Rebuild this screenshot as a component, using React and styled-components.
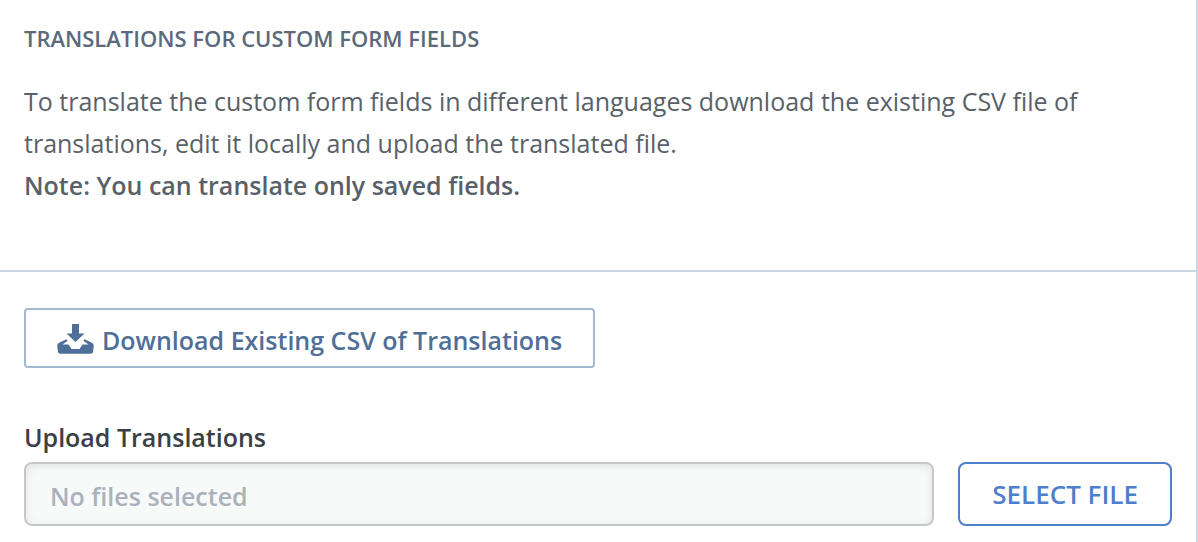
import styled, { createGlobalStyle } from "styled-components";

// estilos globales
const EstilosGlobales = createGlobalStyle`
  * {
    box-sizing: border-box;
  }
  body {
    margin: 0;
    background-color: #ffffff;
    font-family: "Open Sans", "Noto Sans", sans-serif;
  }
  button,
  input {
    font-family: inherit;
  }
`;

// Definir estilos para los componentes
const Panel = styled.main`
  min-height: 100vh;
  border-right: 2px solid #c9d7e5;
`;

const Introduccion = styled.section`
  padding: 23px 24px 64px;
  border-bottom: 2px solid #c9d7e5;
`;

const Titulo = styled.h2`
  margin: 0 0 27px;
  font-size: 22px;
  font-weight: 600;
  line-height: 30px;
  color: #5a6a7c;
  text-transform: uppercase;
`;

const Texto = styled.p`
  margin: 0;
  font-size: 25px;
  line-height: 42px;
  color: #596168;
`;

const Nota = styled.strong`
  display: block;
  font-weight: 600;
`;

const Acciones = styled.section`
  padding: 36px 24px 16px;
`;

const BotonDescargar = styled.button`
  display: flex;
  align-items: center;
  gap: 8px;
  height: 60px;
  margin: 0 0 48px;
  padding: 4px 31px 0;
  border: 2px solid #a3b8d1;
  border-radius: 4px;
  background-color: #ffffff;
  color: #4f6f98;
  font-size: 25px;
  font-weight: 600;
`;

const Etiqueta = styled.label`
  display: block;
  margin-bottom: 4px;
  font-size: 25px;
  font-weight: 600;
  line-height: 42px;
  color: #3a4045;
`;

const FilaArchivo = styled.div`
  display: flex;
  gap: 24px;
`;

const CampoArchivo = styled.input`
  flex: 1;
  min-width: 0;
  height: 64px;
  padding: 4px 24px 0;
  border: 2px solid #c6c8c8;
  border-radius: 8px;
  background-color: #f8faf9;
  box-shadow: inset 0 2px 8px #dfe2e1;
  font-size: 25px;
  font-weight: 600;
  &::placeholder {
    color: #a9b2bc;
    opacity: 1;
  }
`;

const BotonSeleccionar = styled.button`
  height: 64px;
  padding: 0 32px;
  border: 2px solid #4e7fca;
  border-radius: 8px;
  background-color: #ffffff;
  color: #4e7fca;
  font-size: 26px;
  font-weight: 600;
  text-transform: uppercase;
`;

// icono de descarga
function IconoDescargar() {
  return (
    <svg width="37" height="32" viewBox="0 0 37 32" fill="currentColor" aria-hidden="true">
      <path d="M15 0h7v9.500h5.500L18.500 18 9.500 9.500H15z" />
      <path d="M9.500 15.200L2 18.800Q0 20 .2 22l.8 6q.3 1.800 2.300 1.800h30.400q2 0 2.300-1.800l.8-6q.2-2-1.800-3.200L27.500 15.200l-1.200 1.500L31.500 20.500h-6l-3 4.500h-8l-3-4.500h-6l5.200-3.800z" />
    </svg>
  );
}

// componente App
function App() {
  return (
    <>
      <EstilosGlobales />
      <Panel>
        <Introduccion>
          <Titulo>Translations for custom form fields</Titulo>
          <Texto>
            To translate the custom form fields in different languages download
            the existing CSV file of translations, edit it locally and upload
            the translated file.
            <Nota>Note: You can translate only saved fields.</Nota>
          </Texto>
        </Introduccion>
        <Acciones>
          <BotonDescargar type="button">
            <IconoDescargar />
            Download Existing CSV of Translations
          </BotonDescargar>
          <Etiqueta htmlFor="archivo">Upload Translations</Etiqueta>
          <FilaArchivo>
            <CampoArchivo id="archivo" type="text" placeholder="No files selected" readOnly />
            <BotonSeleccionar type="button">Select file</BotonSeleccionar>
          </FilaArchivo>
        </Acciones>
      </Panel>
    </>
  );
}

export default App;
